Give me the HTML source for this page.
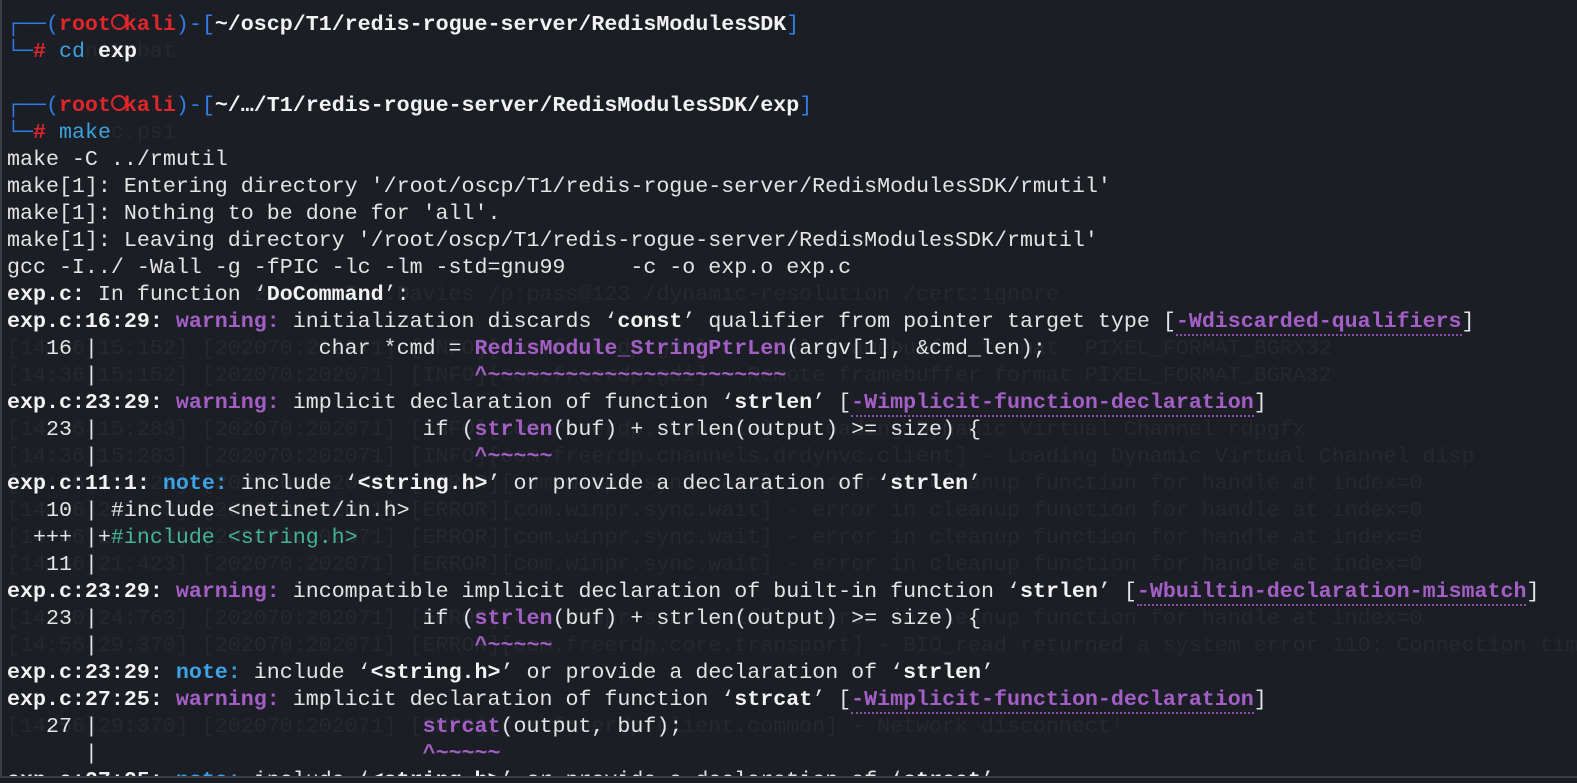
<!DOCTYPE html>
<html><head><meta charset="utf-8"><style>
html,body{margin:0;padding:0;background:#1c1e25;width:1577px;height:783px;overflow:hidden}
#t{position:absolute;left:0;top:0;width:1577px;height:778px;overflow:hidden;border-left:2px solid #3a3c43;border-bottom:2px solid #3a3c43;box-sizing:border-box}
.l{position:absolute;left:5px;white-space:pre;font-family:"Liberation Mono","DejaVu Sans Mono",monospace;font-size:21.65px;line-height:27px;color:#e4e4e4}
b{font-weight:bold;color:#f2f2f2}
.bl{color:#2f7de6}.r{color:#e0262a;font-weight:bold}.c{color:#3ba3dc}
.p{color:#a45fc6;font-weight:bold}.pn{color:#a45fc6}.n{color:#3ba3e6;font-weight:bold}.g{color:#44b594}
.u{border-bottom:2px dotted #8a4fb0}
.k{display:inline-block;width:1ch;height:1em;vertical-align:-3px;position:relative}
.k i{position:absolute;left:0;top:3px;width:12px;height:12px;border:2px solid #e0262a;border-radius:50%;box-sizing:content-box}
.gh{color:#26282f}
</style></head><body><div id="t">
<div class="l gh" style="top:38px">      nat.bat</div>
<div class="l gh" style="top:119px">      uac.ps1</div>
<div class="l gh" style="top:281px">exp.c: In function 2   /u:Tom.Davies /p:pass@123 /dynamic-resolution /cert:ignore</div>
<div class="l gh" style="top:335px">[14:36]15:152] [202070:202071] [INFO][com.freerdp.gdi] - Local framebuffer format  PIXEL_FORMAT_BGRX32</div>
<div class="l gh" style="top:362px">[14:36]15:152] [202070:202071] [INFO][com.freerdp.gdi] - Remote framebuffer format PIXEL_FORMAT_BGRA32</div>
<div class="l gh" style="top:416px">[14:36]15:283] [202070:202071] [INFO][com.freerdp.channels] - Loading Dynamic Virtual Channel rdpgfx</div>
<div class="l gh" style="top:443px">[14:36]15:283] [202070:202071] [INFO][com.freerdp.channels.drdynvc.client] - Loading Dynamic Virtual Channel disp</div>
<div class="l gh" style="top:470px">[14:36]21:423] [202070:202071] [ERROR][com.winpr.sync.wait] - error in cleanup function for handle at index=0</div>
<div class="l gh" style="top:497px">[14:36]21:423] [202070:202071] [ERROR][com.winpr.sync.wait] - error in cleanup function for handle at index=0</div>
<div class="l gh" style="top:524px">[14:36]21:423] [202070:202071] [ERROR][com.winpr.sync.wait] - error in cleanup function for handle at index=0</div>
<div class="l gh" style="top:551px">[14:36]21:423] [202070:202071] [ERROR][com.winpr.sync.wait] - error in cleanup function for handle at index=0</div>
<div class="l gh" style="top:605px">[14:50]24:763] [202070:202071] [ERROR][com.winpr.sync.wait] - error in cleanup function for handle at index=0</div>
<div class="l gh" style="top:632px">[14:56]29:370] [202070:202071] [ERROR][com.freerdp.core.transport] - BIO_read returned a system error 110: Connection tim</div>
<div class="l gh" style="top:713px">[14:56]29:370] [202070:202071] [INFO][com.freerdp.client.common] - Network disconnect!</div>

<div class="l" style="top:11px"><span class="bl">┌──(</span><span class="r">root<span class="k"><i></i></span>kali</span><span class="bl">)-[</span><b>~/oscp/T1/redis-rogue-server/RedisModulesSDK</b><span class="bl">]</span></div>
<div class="l" style="top:38px"><span class="bl">└─</span><span class="r">#</span> <span class="c">cd</span> <b>exp</b></div>
<div class="l" style="top:92px"><span class="bl">┌──(</span><span class="r">root<span class="k"><i></i></span>kali</span><span class="bl">)-[</span><b>~/…/T1/redis-rogue-server/RedisModulesSDK/exp</b><span class="bl">]</span></div>
<div class="l" style="top:119px"><span class="bl">└─</span><span class="r">#</span> <span class="c">make</span></div>
<div class="l" style="top:146px">make -C ../rmutil</div>
<div class="l" style="top:173px">make[1]: Entering directory '/root/oscp/T1/redis-rogue-server/RedisModulesSDK/rmutil'</div>
<div class="l" style="top:200px">make[1]: Nothing to be done for 'all'.</div>
<div class="l" style="top:227px">make[1]: Leaving directory '/root/oscp/T1/redis-rogue-server/RedisModulesSDK/rmutil'</div>
<div class="l" style="top:254px">gcc -I../ -Wall -g -fPIC -lc -lm -std=gnu99     -c -o exp.o exp.c</div>
<div class="l" style="top:281px"><b>exp.c:</b> In function ‘<b>DoCommand</b>’:</div>
<div class="l" style="top:308px"><b>exp.c:16:29:</b> <span class="p">warning:</span> initialization discards ‘<b>const</b>’ qualifier from pointer target type [<span class="p u">-Wdiscarded-qualifiers</span>]</div>
<div class="l" style="top:335px">   16 |                 char *cmd = <span class="p">RedisModule_StringPtrLen</span>(argv[1], &amp;cmd_len);</div>
<div class="l" style="top:362px">      |                             <span class="p">^~~~~~~~~~~~~~~~~~~~~~~~</span></div>
<div class="l" style="top:389px"><b>exp.c:23:29:</b> <span class="p">warning:</span> implicit declaration of function ‘<b>strlen</b>’ [<span class="p u">-Wimplicit-function-declaration</span>]</div>
<div class="l" style="top:416px">   23 |                         if (<span class="p">strlen</span>(buf) + strlen(output) &gt;= size) {</div>
<div class="l" style="top:443px">      |                             <span class="p">^~~~~~</span></div>
<div class="l" style="top:470px"><b>exp.c:11:1:</b> <span class="n">note:</span> include ‘<b>&lt;string.h&gt;</b>’ or provide a declaration of ‘<b>strlen</b>’</div>
<div class="l" style="top:497px">   10 | #include &lt;netinet/in.h&gt;</div>
<div class="l" style="top:524px">  +++ |+<span class="g">#include &lt;string.h&gt;</span></div>
<div class="l" style="top:551px">   11 |</div>
<div class="l" style="top:578px"><b>exp.c:23:29:</b> <span class="p">warning:</span> incompatible implicit declaration of built-in function ‘<b>strlen</b>’ [<span class="p u">-Wbuiltin-declaration-mismatch</span>]</div>
<div class="l" style="top:605px">   23 |                         if (<span class="p">strlen</span>(buf) + strlen(output) &gt;= size) {</div>
<div class="l" style="top:632px">      |                             <span class="p">^~~~~~</span></div>
<div class="l" style="top:659px"><b>exp.c:23:29:</b> <span class="n">note:</span> include ‘<b>&lt;string.h&gt;</b>’ or provide a declaration of ‘<b>strlen</b>’</div>
<div class="l" style="top:686px"><b>exp.c:27:25:</b> <span class="p">warning:</span> implicit declaration of function ‘<b>strcat</b>’ [<span class="p u">-Wimplicit-function-declaration</span>]</div>
<div class="l" style="top:713px">   27 |                         <span class="p">strcat</span>(output, buf);</div>
<div class="l" style="top:740px">      |                         <span class="p">^~~~~~</span></div>
<div class="l" style="top:767px"><b>exp.c:27:25:</b> <span class="n">note:</span> include ‘<b>&lt;string.h&gt;</b>’ or provide a declaration of ‘<b>strcat</b>’</div>
</div></body></html>
